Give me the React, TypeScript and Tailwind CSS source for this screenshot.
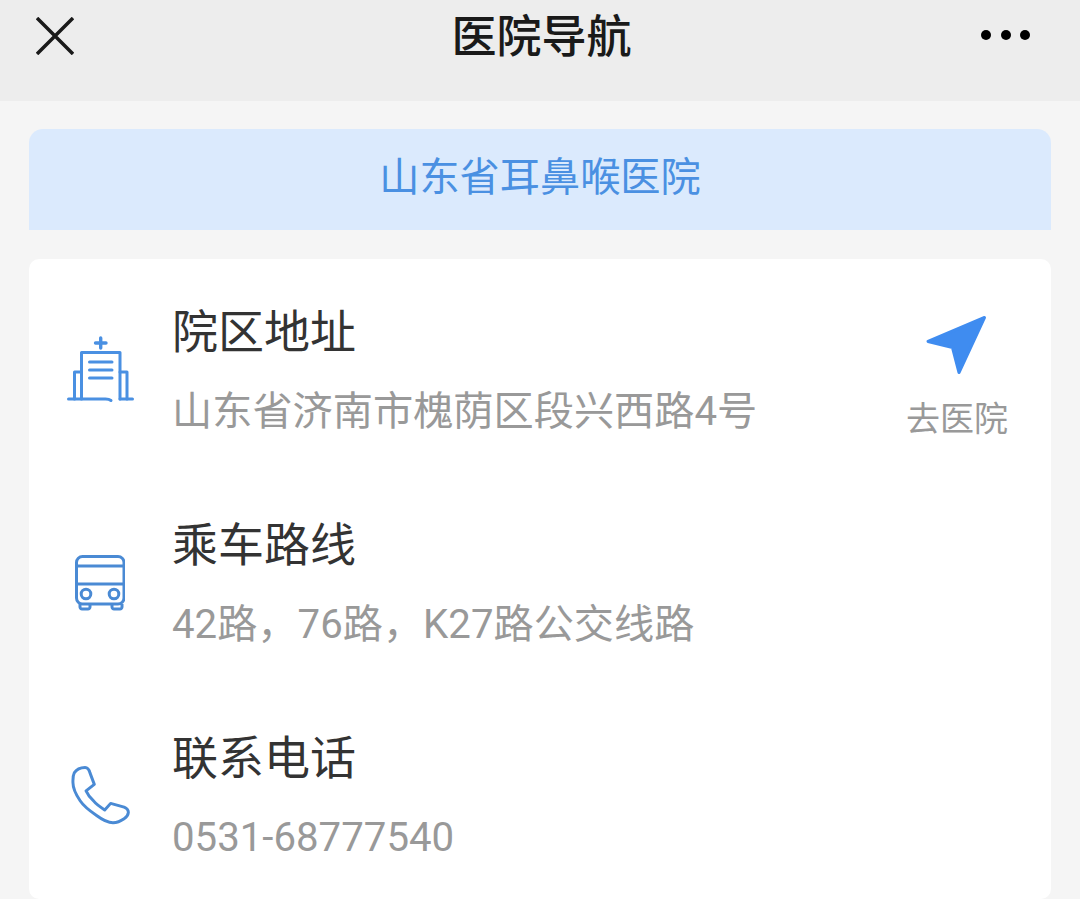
import React from 'react';

const font = { fontFamily: '"Roboto", "Noto Sans CJK SC", sans-serif' };

const HospitalIcon = () => (
  <svg width="67" height="68" viewBox="0 0 67 68" fill="none" stroke="#4a90e2" strokeWidth="3" strokeLinecap="round" strokeLinejoin="round">
    <path d="M33.700 2v10M28.500 7h10.500" strokeWidth="3.400" />
    <path d="M14.500 63V16.500h38.500V63" />
    <path d="M22.500 26h22.500M22.500 34h22.500M22.500 42h22.500" />
    <path d="M1.500 63h37c2 0 4 .3 5.500 1.500M53 63h12.500" />
    <path d="M14 36H7.500v27M53 36h7v27" />
  </svg>
);

const BusIcon = () => (
  <svg width="50" height="56" viewBox="0 0 50 56" fill="none" stroke="#4a8ad4" strokeWidth="3">
    <rect x="1.500" y="1.500" width="47.500" height="47.500" rx="6" />
    <path d="M1.500 11h47.500M1.500 29h47.500" />
    <circle cx="11" cy="39" r="4.800" />
    <circle cx="39" cy="39" r="4.800" />
    <path d="M5 49v3c0 1 1 2 2 2h6c1 0 2-1 2-2v-3M37 49v3c0 1 1 2 2 2h6c1 0 2-1 2-2v-3" />
  </svg>
);

const PhoneIcon = () => (
  <svg width="59" height="59" viewBox="0 0 60 60" fill="none" stroke="#4a8ad4" strokeWidth="3" strokeLinejoin="round">
    <path d="M14.300 1.500c2.500 0 4.200 2.500 5 5.500L23.700 18.700 15.300 25.300C17 29 19 32 22.700 35.300C26 39.500 30 42 34.300 44.700L40.300 38 54 41.800C57 43 58.500 45 58.300 47.500C58 50.500 56 52.500 54 53.700C50 56.500 46.500 57.700 42.700 57.700C37 57.700 31 54 26 50.300C19 45.500 13 41 9.300 35.300C5 29 2 23 2 17C1.800 12 2 9.500 3.300 7C5.500 3.500 10 1.500 14.300 1.500z" />
  </svg>
);

const rows = [
  { title: '院区地址', desc: '山东省济南市槐荫区段兴西路4号', icon: <HospitalIcon />, iconBox: 'mt-[77px] ml-[38px]' },
  { title: '乘车路线', desc: '42路，76路，K27路公交线路', icon: <BusIcon />, iconBox: 'mt-[83px] ml-[46px]' },
  { title: '联系电话', desc: '0531-68777540', icon: <PhoneIcon />, iconBox: 'mt-[81px] ml-[42px]' },
];

export default function App() {
  return (
    <div className="h-[899px] w-[1080px] overflow-hidden bg-[#f5f5f5]" style={font}>
      <header className="flex h-[101px] items-start bg-[#ededed] pl-[36px] pr-[50px]">
        <div className="flex-1">
          <svg className="mt-[17px]" width="38" height="38" viewBox="0 0 38 38" stroke="#1a1a1a" strokeWidth="3.500">
            <path d="M1 1l36 36M37 1L1 37" />
          </svg>
        </div>
        <h1 className="mt-[6px] ml-[17px] text-[45px] leading-[64px] font-medium text-[#1a1a1a]">医院导航</h1>
        <div className="mt-[30px] flex flex-1 justify-end gap-[9.500px]">
          <span className="h-[10px] w-[10px] rounded-full bg-black" />
          <span className="h-[10px] w-[10px] rounded-full bg-black" />
          <span className="h-[10px] w-[10px] rounded-full bg-black" />
        </div>
      </header>

      <div className="px-[29px] pt-[28px]">
        <div className="flex h-[101px] items-center justify-center rounded-t-[14px] bg-[#dbeafd] pb-[2px] text-[40.200px] text-[#4a90e2]">
          山东省耳鼻喉医院
        </div>

        <div className="relative mt-[29px] rounded-[10px] bg-white pb-[1px]">
          {rows.map(row => (
            <div key={row.title} className="flex h-[213px]">
              <div className="w-[143px] shrink-0">
                <div className={row.iconBox + ' h-fit w-fit'}>{row.icon}</div>
              </div>
              <div className="pt-[41px]">
                <div className="text-[46px] leading-[64px] text-[#333]">{row.title}</div>
                <div className="mt-[19px] text-[40.200px] leading-[58px] text-[#999]">{row.desc}</div>
              </div>
            </div>
          ))}

          <div className="absolute top-[55px] right-[43px] flex w-[102px] flex-col items-center">
            <svg className="ml-[19px] self-start" width="62" height="62" viewBox="0 0 62 62" fill="#3f8cf0" stroke="#3f8cf0" strokeWidth="3" strokeLinejoin="round">
              <path d="M59.500 3.500L3 27.500l24.500 6L34 58.500z" />
            </svg>
            <span className="mt-[19px] text-[34px] leading-[48px] whitespace-nowrap text-[#999]">去医院</span>
          </div>
        </div>
      </div>
    </div>
  );
}
